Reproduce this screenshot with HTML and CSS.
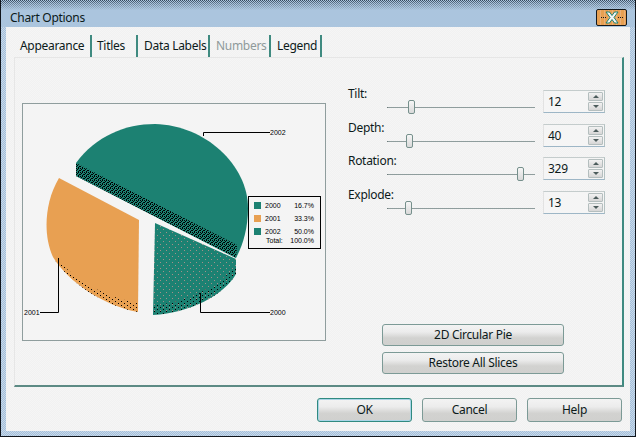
FILE: index.html
```html
<!DOCTYPE html>
<html lang="en">
<head>
  <meta charset="utf-8">
  <title>Chart Options</title>
  <link rel="stylesheet" href="styles.css">
</head>
<body>
  <div class="window">
    <header class="titlebar">
      <span class="title">Chart Options</span>
      <button class="close" aria-label="Close">
        <svg width="24" height="13" viewBox="0 0 24 13">
          <path d="M1 6.500h5M18 6.500h5" stroke="#14181c" stroke-dasharray="1 1"/>
          <path d="M6 1h3.500l2.500 3.500 2.500-3.500h3.500l-4 5.500 4 5.500h-3.500l-2.500-3.500-2.500 3.500h-3.500l4-5.500z" fill="#f4f4f4" stroke="#1c8172" stroke-width="1"/>
        </svg>
      </button>
    </header>

    <div class="client">
      <nav class="tabs">
        <a class="tab tab-appearance">Appearance</a>
        <a class="tab tab-titles">Titles</a>
        <a class="tab tab-labels">Data Labels</a>
        <a class="tab tab-numbers">Numbers</a>
        <a class="tab tab-legend">Legend</a>
      </nav>

      <main class="panel">
        <div class="chart">
          <svg class="chart-svg" width="302" height="236" viewBox="23 104 302 236">
            <defs>
              <pattern id="hatch" width="4" height="4" patternUnits="userSpaceOnUse">
                <rect width="4" height="4" fill="#1c8172"/>
                <path d="M0 0h1v1h-1zM2 0h1v1h-1zM1 1h1v1h-1zM3 2h1v1h-1zM0 2h1v1h-1zM2 3h1v1h-1z" fill="#000"/>
              </pattern>
              <pattern id="pink-dots" width="6" height="6" patternUnits="userSpaceOnUse">
                <rect width="6" height="6" fill="#1c8172"/>
                <rect x="1" y="1" width="1" height="1" fill="#a4908a"/>
                <rect x="4" y="4" width="1" height="1" fill="#a4908a"/>
              </pattern>
              <pattern id="black-dots" width="6" height="4" patternUnits="userSpaceOnUse">
                <rect x="1" y="1" width="1" height="1" fill="#000"/>
                <rect x="4" y="3" width="1" height="1" fill="#000"/>
              </pattern>
            </defs>

            <!-- 2002 slice -->
            <path d="M76 163 C96 136 125 124 155 124 C205 125 248 165 248 208 C248 228 243 245 236 258 L76 176 Z" fill="#1c8172"/>
            <path d="M76 163 L237 245 L236 258 L76 176 Z" fill="url(#hatch)"/>

            <!-- 2001 slice -->
            <path d="M59 178 L139 220 L138 312 C104 306 68 282 53 257 C44 238 43 205 59 178 Z" fill="#e8a052"/>
            <path d="M53 257 C68 282 104 306 138 312 L138 303 C108 298 78 282 60 262 Z" fill="url(#black-dots)"/>

            <!-- 2000 slice -->
            <path d="M155 223 L236 259 L236 274 C224 295 190 313 153 315 Z" fill="url(#pink-dots)"/>
            <path d="M153 305 C185 304 220 285 236 266 L236 274 C224 295 190 313 153 315 Z" fill="url(#black-dots)"/>

            <!-- leaders -->
            <path class="leader" d="M203.500 136V132.500H270M58.500 258V312.500H40M200.500 293V312.500H270"/>
            <text class="chart-text" x="270" y="134.500">2002</text>
            <text class="chart-text" x="24" y="314.500">2001</text>
            <text class="chart-text" x="270" y="314.500">2000</text>

            <!-- legend -->
            <rect class="legend-box" x="248.500" y="196.500" width="72" height="52"/>
            <rect x="254" y="202" width="7" height="7" fill="#1c8172"/>
            <rect x="254" y="215" width="7" height="7" fill="#e8a052"/>
            <rect x="254" y="228" width="7" height="7" fill="#1c8172"/>
            <text class="chart-text" x="265" y="208">2000</text>
            <text class="chart-text" x="265" y="221">2001</text>
            <text class="chart-text" x="265" y="234">2002</text>
            <text class="chart-text" x="266" y="243">Total:</text>
            <text class="chart-text num" x="314" y="208">16.7%</text>
            <text class="chart-text num" x="314" y="221">33.3%</text>
            <text class="chart-text num" x="314" y="234">50.0%</text>
            <text class="chart-text num" x="314" y="243">100.0%</text>
          </svg>
        </div>

        <section class="controls">
          <div class="rows">
            <div class="row">
              <div class="row-left">
                <label>Tilt:</label>
                <div class="slider"><span class="thumb" style="left: 20px"></span></div>
              </div>
              <div class="spin">
                <span class="spin-value">12</span>
                <div class="spin-btns"><button class="spin-btn up"></button><button class="spin-btn down"></button></div>
              </div>
            </div>
            <div class="row">
              <div class="row-left">
                <label>Depth:</label>
                <div class="slider"><span class="thumb" style="left: 18px"></span></div>
              </div>
              <div class="spin">
                <span class="spin-value">40</span>
                <div class="spin-btns"><button class="spin-btn up"></button><button class="spin-btn down"></button></div>
              </div>
            </div>
            <div class="row">
              <div class="row-left">
                <label>Rotation:</label>
                <div class="slider"><span class="thumb" style="left: 129px"></span></div>
              </div>
              <div class="spin">
                <span class="spin-value">329</span>
                <div class="spin-btns"><button class="spin-btn up"></button><button class="spin-btn down"></button></div>
              </div>
            </div>
            <div class="row">
              <div class="row-left">
                <label>Explode:</label>
                <div class="slider"><span class="thumb" style="left: 17px"></span></div>
              </div>
              <div class="spin">
                <span class="spin-value">13</span>
                <div class="spin-btns"><button class="spin-btn up"></button><button class="spin-btn down"></button></div>
              </div>
            </div>
          </div>

          <div class="side-buttons">
            <button class="btn">2D Circular Pie</button>
            <button class="btn">Restore All Slices</button>
          </div>
        </section>
      </main>

      <footer class="footer">
        <button class="btn btn-default">OK</button>
        <button class="btn">Cancel</button>
        <button class="btn">Help</button>
      </footer>
    </div>
  </div>
</body>
</html>
```

FILE: styles.css
```css
* {
  box-sizing: border-box;
}

html, body {
  margin: 0;
  padding: 0;
}

body {
  width: 636px;
  height: 437px;
  overflow: hidden;
  font-family: "Noto Sans", "Open Sans", sans-serif;
  font-size: 12px;
  letter-spacing: -0.3px;
  color: #0c1a1a;
}

button {
  font: inherit;
  letter-spacing: inherit;
  color: inherit;
  padding: 0;
}

.window {
  width: 636px;
  height: 437px;
  display: flex;
  flex-direction: column;
  padding: 0 5px 5px 5px;
  border: 1px solid #10151c;
  border-top: 0;
  background: repeating-conic-gradient(#c9d9e9 0 25%, #a3bfdb 0 50%) 0 0 / 2px 2px;
}

.titlebar {
  height: 27px;
  margin: 0 -5px;
  padding: 0 8px 0 9px;
  display: flex;
  align-items: center;
  justify-content: space-between;
  background:
    linear-gradient(rgba(171, 197, 222, 0) 0, rgba(171, 197, 222, 0.5) 4px, #abc5de 10px),
    repeating-conic-gradient(#2f4156 0 25%, #abc5de 0 50%) 0 0 / 2px 2px;
}

.title {
  margin-top: 8px;
}

.close {
  width: 31px;
  height: 17px;
  margin-top: 8px;
  display: flex;
  align-items: center;
  justify-content: center;
  border: 1px solid #14181c;
  border-radius: 2px;
  background: repeating-linear-gradient(90deg, #e8a052 0 3px, #eab078 3px 4px);
}

.client {
  flex: 1;
  display: flex;
  flex-direction: column;
  padding: 0 7px 0 8px;
  background: repeating-conic-gradient(#f5f5f5 0 25%, #f1f1f1 0 50%) 0 0 / 2px 2px;
}

.tabs {
  height: 30px;
  display: flex;
  align-items: flex-end;
}

.tab {
  height: 22px;
  display: block;
  line-height: 21px;
  padding-left: 6px;
  border-right: 2px solid #3f8a80;
  white-space: nowrap;
}

.tab-appearance { width: 78px; }
.tab-titles { width: 46px; padding-left: 5px; }
.tab-labels { width: 72px; }
.tab-numbers { width: 61px; color: #8f9a9a; }
.tab-legend { width: 51px; }

.panel {
  width: 610px;
  height: 330px;
  display: flex;
  padding: 45px 0 0 7px;
  border-top: 1px solid #e6e6e6;
  border-left: 1px solid #e6e6e6;
  border-right: 2px solid #3f8a80;
  border-bottom: 2px solid #5c8a84;
}

.chart {
  width: 304px;
  height: 238px;
  flex: none;
  border: 1px solid #8f9d9d;
  background: #f4f4f4;
}

.chart-svg {
  display: block;
}

.leader {
  fill: none;
  stroke: #000;
  stroke-width: 1;
}

.legend-box {
  fill: #f4f4f4;
  stroke: #000;
  stroke-width: 1;
}

.chart-text {
  font-family: "Liberation Sans", sans-serif;
  font-size: 7px;
  letter-spacing: 0;
  fill: #000;
}

.num {
  text-anchor: end;
}

.controls {
  width: 257px;
  margin: -17px 0 0 22px;
  display: flex;
  flex-direction: column;
}

.rows {
  display: flex;
  flex-direction: column;
}

.row {
  height: 33.670px;
  display: flex;
  justify-content: space-between;
}

.row-left {
  width: 187px;
  display: flex;
  flex-direction: column;
}

.row-left label {
  height: 16px;
  line-height: 16px;
}

.slider {
  position: relative;
  height: 1px;
  margin: 5px 0 0 39px;
  width: 148px;
  background: #8f9d9d;
  border-left: 1px solid #6f7d7d;
}

.thumb {
  position: absolute;
  top: -7px;
  width: 7px;
  height: 14px;
  border: 1px solid #76908c;
  border-radius: 2px;
  background: linear-gradient(#f6f6f6, #d9d9d9);
}

.spin {
  width: 62px;
  height: 23px;
  margin-top: 4px;
  display: flex;
  justify-content: space-between;
  background: #f5f5f5;
  border-top: 1px solid #c4cccc;
  border-left: 1px solid #e2e2e2;
  border-right: 1px solid #b4c2c2;
  border-bottom: 1px solid #9db6c6;
}

.spin-value {
  padding-left: 4px;
  line-height: 21px;
}

.spin-btns {
  width: 16px;
  display: flex;
  flex-direction: column;
  gap: 1px;
  padding: 1px 1px 0 0;
}

.spin-btn {
  position: relative;
  height: 9px;
  border: 1px solid #b4bebe;
  border-radius: 1px;
  background: linear-gradient(#f2f2f2, #d6d6d6);
}

.spin-btn::after {
  content: "";
  position: absolute;
  left: 4px;
  width: 0;
  height: 0;
  border-left: 3px solid transparent;
  border-right: 3px solid transparent;
}

.spin-btn.up::after {
  top: 2px;
  border-bottom: 3px solid #4c5c5c;
}

.spin-btn.down::after {
  top: 2px;
  border-top: 3px solid #4c5c5c;
}

.side-buttons {
  margin: auto 0 11px 34px;
  display: flex;
  flex-direction: column;
  gap: 6px;
}

.side-buttons .btn {
  width: 182px;
  height: 22px;
}

.btn {
  display: block;
  border: 1px solid #7c9a96;
  border-radius: 3px;
  background: linear-gradient(#f3f3f3 0, #ececec 35%, #d2d2d0 65%, #d0d0ce 100%);
  line-height: 1;
}

.footer {
  flex: 1;
  display: flex;
  justify-content: flex-end;
  gap: 10px;
  padding: 11px 1px 0 0;
}

.footer .btn {
  width: 95px;
  height: 24px;
}

.btn-default {
  border: 1px solid #2f8a80;
  box-shadow: inset 0 0 0 1px #a9d4e6;
}
```
